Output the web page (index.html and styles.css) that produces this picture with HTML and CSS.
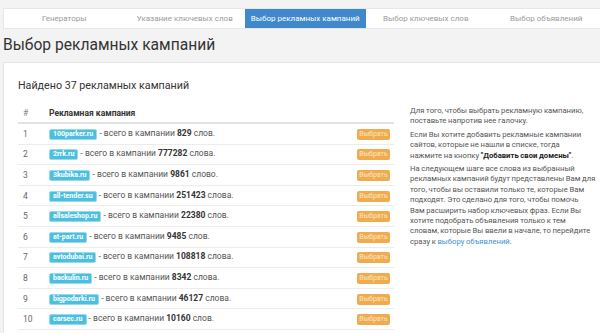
FILE: index.html
```html
<!DOCTYPE html>
<html lang="ru">
<head>
<meta charset="utf-8">
<link rel="stylesheet" href="styles.css">
</head>
<body>
<div class="page">
  <nav class="tabs">
    <div class="tab">Генераторы</div>
    <div class="tab">Указание ключевых слов</div>
    <div class="tab active">Выбор рекламных кампаний</div>
    <div class="tab">Выбор ключевых слов</div>
    <div class="tab">Выбор объявлений</div>
  </nav>
  <h1 class="title">Выбор рекламных кампаний</h1>
  <section class="panel">
    <div class="main">
      <h2 class="found">Найдено 37 рекламных кампаний</h2>
      <table class="tbl">
        <thead>
          <tr><th class="num">#</th><th>Рекламная кампания</th><th></th></tr>
        </thead>
        <tbody>
          <tr><td class="num">1</td><td><span class="badge">100parker.ru</span> - всего в кампании <b>829</b> слов.</td><td class="act"><span class="btn">Выбрать</span></td></tr>
          <tr><td class="num">2</td><td><span class="badge">2rrk.ru</span> - всего в кампании <b>777282</b> слова.</td><td class="act"><span class="btn">Выбрать</span></td></tr>
          <tr><td class="num">3</td><td><span class="badge">3kubika.ru</span> - всего в кампании <b>9861</b> слово.</td><td class="act"><span class="btn">Выбрать</span></td></tr>
          <tr><td class="num">4</td><td><span class="badge">all-tender.su</span> - всего в кампании <b>251423</b> слова.</td><td class="act"><span class="btn">Выбрать</span></td></tr>
          <tr><td class="num">5</td><td><span class="badge">allsaleshop.ru</span> - всего в кампании <b>22380</b> слов.</td><td class="act"><span class="btn">Выбрать</span></td></tr>
          <tr><td class="num">6</td><td><span class="badge">at-part.ru</span> - всего в кампании <b>9485</b> слов.</td><td class="act"><span class="btn">Выбрать</span></td></tr>
          <tr><td class="num">7</td><td><span class="badge">avtodubai.ru</span> - всего в кампании <b>108818</b> слова.</td><td class="act"><span class="btn">Выбрать</span></td></tr>
          <tr><td class="num">8</td><td><span class="badge">backulin.ru</span> - всего в кампании <b>8342</b> слова.</td><td class="act"><span class="btn">Выбрать</span></td></tr>
          <tr><td class="num">9</td><td><span class="badge">bigpodarki.ru</span> - всего в кампании <b>46127</b> слова.</td><td class="act"><span class="btn">Выбрать</span></td></tr>
          <tr><td class="num">10</td><td><span class="badge">carsec.ru</span> - всего в кампании <b>10160</b> слов.</td><td class="act"><span class="btn">Выбрать</span></td></tr>
        </tbody>
      </table>
    </div>
    <aside class="side">
      <p>Для того, чтобы выбрать рекламную кампанию,<br>поставьте напротив нее галочку.</p>
      <p>Если Вы хотите добавить рекламные кампании<br>сайтов, которые не нашли в списке, тогда<br>нажмите на кнопку <b>"Добавить свои домены"</b>.</p>
      <p>На следующем шаге все слова из выбранный<br>рекламных кампаний будут представлены Вам для<br>того, чтобы вы оставили только те, которые Вам<br>подходят. Это сделано для того, чтобы помочь<br>Вам расширить набор ключевых фраз. Если Вы<br>хотите подобрать объявления только к тем<br>словам, которые Вы ввели в начале, то перейдите<br>сразу к <a href="#">выбору объявлений</a>.</p>
    </aside>
  </section>
</div>
</body>
</html>
```
FILE: styles.css
```css
html, body {
  margin: 0;
  padding: 0;
  background: #f3f3f3;
  font-family: Roboto, "Liberation Sans", Arial, sans-serif;
  color: #555;
  overflow: hidden;
}
.page {
  padding: 8px 0 0 3px;
}
.tabs {
  display: flex;
  background: #fff;
  height: 21px;
  border: 1px solid #e6e6e6;
  border-right: none;
  box-sizing: border-box;
  overflow: hidden;
}
.tab {
  flex: 0 0 120.5px;
  text-align: center;
  font-size: 8px;
  line-height: 19px;
  color: #9a9a9a;
}
.tab.active {
  background: #3f88cc;
  color: #fff;
}
.title {
  margin: 0;
  font-weight: normal;
  font-size: 15.6px;
  line-height: 33px;
  color: #333;
  height: 33px;
}
.panel {
  background: #fff;
  border: 1px solid #e4e4e4;
  border-right: none;
  display: flex;
  height: 300px;
  box-sizing: border-box;
}
.main {
  flex: none;
  width: 376px;
  margin-left: 14px;
}
.found {
  margin: 15px 0 0;
  font-weight: normal;
  font-size: 10.7px;
  line-height: 16px;
  color: #333;
}
.tbl {
  margin-top: 9px;
  width: 376px;
  border-collapse: collapse;
  font-size: 8.5px;
}
.tbl th {
  text-align: left;
  font-weight: bold;
  color: #333;
  height: 19px;
  padding: 0;
  border-bottom: 2px solid #e3e3e3;
  vertical-align: middle;
}
.tbl td {
  height: 19.6px;
  padding: 0;
  border-bottom: 1px solid #ececec;
  vertical-align: middle;
  color: #555;
}
.tbl b {
  color: #333;
}
.tbl .num {
  width: 26px;
  padding-left: 5px;
  color: #666;
  font-weight: normal;
}
.tbl th.num {
  color: #888;
}
.badge {
  display: inline-block;
  background: #4bbfe0;
  color: #fff;
  font-weight: bold;
  font-size: 7px;
  line-height: 9px;
  padding: 0 3px;
  border: 1px solid #9ad8ec;
  border-radius: 2px;
}
.act {
  text-align: right;
  width: 40px;
  padding-right: 4px !important;
}
.btn {
  display: inline-block;
  background: #f0ab4e;
  color: #fbe7c8;
  font-size: 7px;
  line-height: 11px;
  width: 33px;
  text-align: center;
  border-radius: 2px;
}
.side {
  flex: none;
  margin-left: 16px;
  width: 184px;
  padding-top: 43px;
  font-size: 7.7px;
  line-height: 10.4px;
  word-spacing: -0.3px;
  color: #555;
  white-space: nowrap;
}
.side p {
  margin: 0 0 3px;
}
.side b {
  color: #222;
}
.side a {
  color: #3d8fd6;
  text-decoration: none;
}
```
